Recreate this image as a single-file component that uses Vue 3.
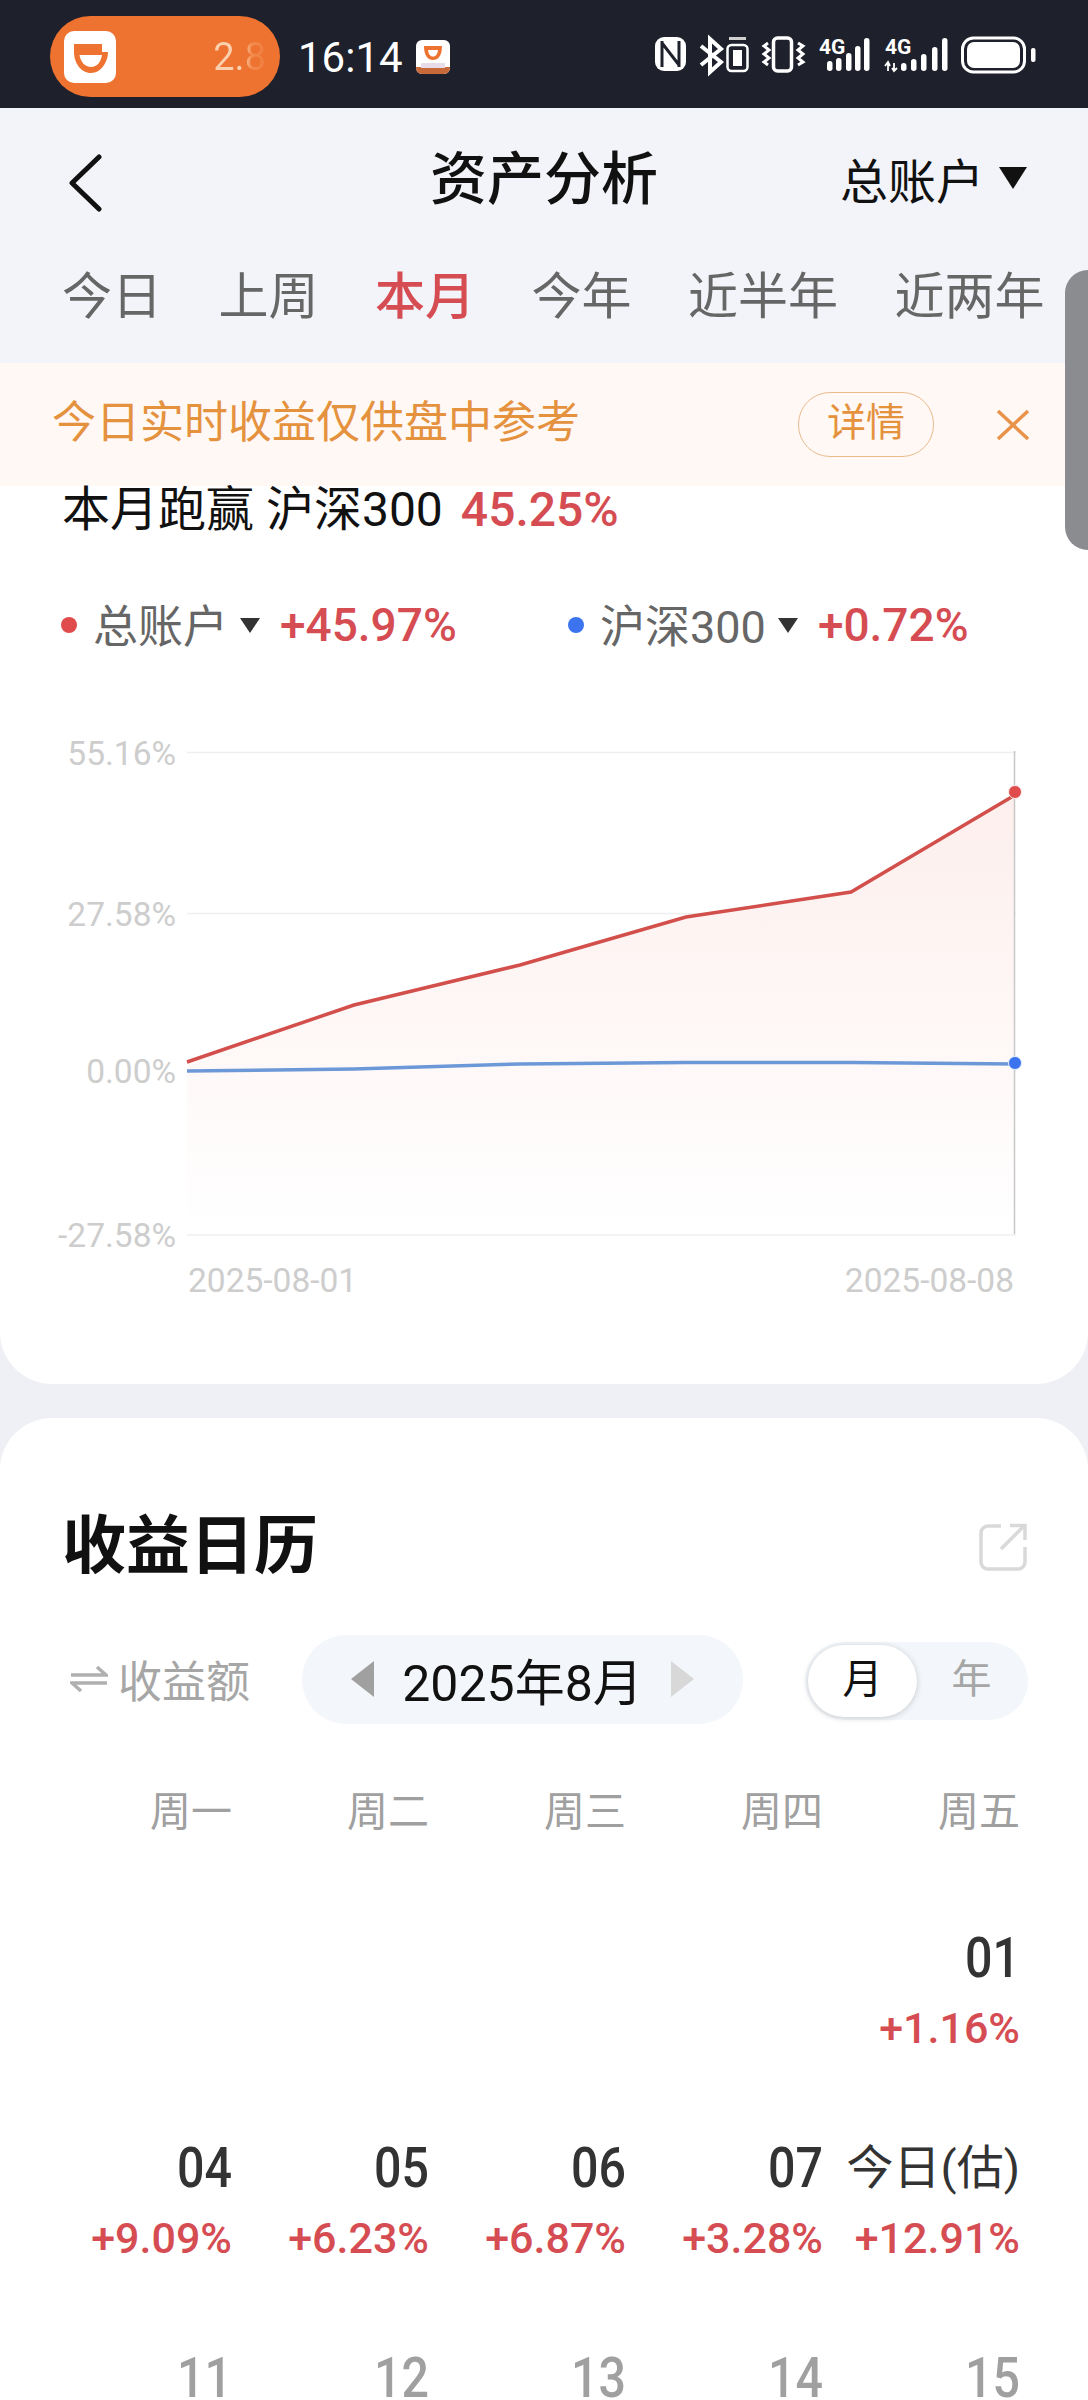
<template>
  <div class="page">
    <div class="status">
      <div class="pill">
        <svg class="didi" viewBox="0 0 52 52">
          <rect width="52" height="52" rx="10" fill="#fff" />
          <path d="M10 21 V13 H38 V21 H44 C44 31 37 42 27 42 C17 42 10 32 10 21 Z" fill="#ee7230" />
          <path d="M15.500 24 H38 C37 31 33 36 27 36 C21 36 16.500 31 15.500 24 Z" fill="#fff" />
          <rect x="38" y="12" width="8" height="9" fill="#fff" />
        </svg>
        <span class="pill-num">2.8</span>
      </div>
      <span class="time">16:14</span>
      <svg class="app-icon" viewBox="0 0 34 34">
        <rect width="34" height="34" rx="6" fill="#fff" />
        <path d="M8 6 H26 C26 16 22 20 17 20 C12 20 8 16 8 6 Z" fill="#ee7230" />
        <path d="M12 10 H22 C21.500 14 20 16.500 17 16.500 C14 16.500 12.500 14 12 10 Z" fill="#fff" />
        <path d="M0 27 H34 V28 A6 6 0 0 1 28 34 H6 A6 6 0 0 1 0 28 Z" fill="#c8693a" />
        <rect x="5" y="23" width="24" height="5" fill="#e9dcea" />
      </svg>
      <svg class="sys-icons" viewBox="640 25 410 60">
        <!-- nfc -->
        <rect x="653" y="38" width="31" height="34" rx="9" fill="#fff" />
        <path d="M660 42 V68 M677 42 V68 M660 44 L677 66" fill="none" stroke="#1e212b" stroke-width="3" />
        <!-- bluetooth -->
        <path d="M699 47 L719 63 L708 73 V40 L719 50 L699 66" fill="none" stroke="#fff" stroke-width="4" />
        <!-- phone battery -->
        <rect x="727" y="38" width="17" height="3" fill="#d0d0d0" />
        <rect x="725.500" y="46" width="20" height="26" rx="4" fill="none" stroke="#fff" stroke-width="2.500" />
        <rect x="731" y="51" width="9" height="16" fill="#fff" />
        <!-- vibrate -->
        <rect x="771.500" y="39" width="18" height="33" rx="4" fill="none" stroke="#fff" stroke-width="3.500" />
        <path d="M766 44 L762 47 L767 51 L762 55 L767 59 L762 63 L766 66 M796 44 L801 47 L796 51 L801 55 L796 59 L801 63 L796 66" fill="none" stroke="#fff" stroke-width="3" />
        <!-- signal 1 -->
        <text x="817" y="55" class="sig-text">4G</text>
        <rect x="825" y="62" width="5.500" height="10" rx="2.700" fill="#fff" />
        <rect x="834" y="59" width="5.500" height="13" rx="2.700" fill="#fff" />
        <rect x="844" y="54" width="5.500" height="18" rx="2.700" fill="#fff" />
        <rect x="853" y="47" width="5.500" height="25" rx="2.700" fill="#fff" />
        <rect x="862" y="39" width="5.500" height="33" rx="2.700" fill="#fff" />
        <!-- signal 2 -->
        <text x="883" y="55" class="sig-text">4G</text>
        <path d="M886 72 V64 M892 72 V64 M883 67 L886 63 L888 67 M890 69 L892 72 L895 69" fill="none" stroke="#fff" stroke-width="1.800" />
        <rect x="899" y="64" width="5.500" height="8" rx="2.700" fill="#fff" />
        <rect x="909" y="60" width="5.500" height="12" rx="2.700" fill="#fff" />
        <rect x="919" y="55" width="5.500" height="17" rx="2.700" fill="#fff" />
        <rect x="930" y="48" width="5.500" height="24" rx="2.700" fill="#fff" />
        <rect x="940" y="39" width="5.500" height="33" rx="2.700" fill="#fff" />
        <!-- battery -->
        <rect x="960.500" y="39" width="62" height="34" rx="11" fill="none" stroke="#fff" stroke-width="3" />
        <rect x="965" y="43" width="53" height="26" rx="7" fill="#fff" />
        <rect x="1029" y="49" width="4.500" height="14" rx="2" fill="#fff" />
      </svg>
    </div>

    <div class="nav">
      <div class="nav-top">
        <svg class="back" viewBox="0 0 36 58">
          <path d="M32 3 L5 29 L32 55" fill="none" stroke="#111" stroke-width="5" stroke-linecap="round" stroke-linejoin="round" />
        </svg>
        <div class="nav-title">资产分析</div>
        <div class="account">
          总账户
          <span class="caret big"></span>
        </div>
      </div>
      <div class="tabs">
        <span v-for="t in tabs" :key="t" class="tab" :class="{ active: t === '本月' }">{{ t }}</span>
      </div>
    </div>

    <div class="notice">
      <span class="notice-text">今日实时收益仅供盘中参考</span>
      <span class="detail">详情</span>
      <svg class="close" viewBox="0 0 34 34">
        <path d="M2 3 L32 31 M32 3 L2 31" fill="none" stroke="#e8924a" stroke-width="3.500" />
      </svg>
    </div>

    <div class="card chart-card">
      <div class="summary">
        <span>本月跑赢 沪深300</span>
        <span class="up rate">45.25%</span>
      </div>
      <div class="legend">
        <div class="legend-item first">
          <i class="dot red"></i>
          <span class="legend-name">总账户</span>
          <span class="caret"></span>
          <span class="up legend-val">+45.97%</span>
        </div>
        <div class="legend-item">
          <i class="dot blue"></i>
          <span class="legend-name">沪深300</span>
          <span class="caret"></span>
          <span class="up legend-val">+0.72%</span>
        </div>
      </div>
      <svg class="chart" viewBox="0 730 1088 580">
        <defs>
          <linearGradient id="area" x1="0" y1="0" x2="0" y2="1">
            <stop offset="0" stop-color="#fdefed" />
            <stop offset="1" stop-color="#ffffff" />
          </linearGradient>
        </defs>
        <line v-for="g in gridY" :key="g.y" x1="187" x2="1016" :y1="g.y" :y2="g.y" class="grid" />
        <text v-for="g in gridY" :key="g.label" x="176" :y="g.y + 12" text-anchor="end" class="axis">{{ g.label }}</text>
        <path :d="areaPath" fill="url(#area)" />
        <line x1="1014.500" x2="1014.500" y1="751" y2="1234" class="cursor" />
        <polyline :points="redPoints" class="line-red" />
        <polyline :points="bluePoints" class="line-blue" />
        <circle cx="1015" cy="792" r="6.500" fill="#e04b4b" stroke="#fdeeee" stroke-width="1" />
        <circle cx="1015" cy="1063" r="6.500" fill="#3b74ee" stroke="#e8efff" stroke-width="1" />
        <text x="188" y="1292" class="axis">2025-08-01</text>
        <text x="1014" y="1292" text-anchor="end" class="axis">2025-08-08</text>
      </svg>
    </div>

    <div class="card calendar">
      <div class="cal-head">
        <h2>收益日历</h2>
        <svg class="share" viewBox="0 0 48 48">
          <path d="M22 3 H9 A7 7 0 0 0 2 10 V39 A7 7 0 0 0 9 46 H39 A7 7 0 0 0 46 39 V24" fill="none" stroke="#d9d9d9" stroke-width="3.500" />
          <path d="M22 26 L45 3 M31 2.500 H46 V17" fill="none" stroke="#d9d9d9" stroke-width="3.500" />
        </svg>
      </div>
      <div class="controls">
        <div class="metric">
          <svg class="swap" viewBox="0 0 38 28">
            <path d="M1 10 H36 L27 2 M37 18 H2 L11 26" fill="none" stroke="#b0b0b0" stroke-width="3.500" />
          </svg>
          收益额
        </div>
        <div class="month">
          <i class="tri left"></i>
          <span>2025年8月</span>
          <i class="tri right"></i>
        </div>
        <div class="segment">
          <span class="seg on">月</span>
          <span class="seg">年</span>
        </div>
      </div>
      <div class="grid-cal weekdays">
        <span v-for="d in weekdays" :key="d">{{ d }}</span>
      </div>
      <div class="grid-cal days">
        <div v-for="(c, i) in cells" :key="i" class="cell" :class="{ future: c.future }">
          <div class="day" :class="{ today: c.today }">{{ c.day }}</div>
          <div class="up pct">{{ c.pct }}</div>
        </div>
      </div>
    </div>

    <div class="side-handle"></div>
  </div>
</template>

<script setup>
const tabs = ['今日', '上周', '本月', '今年', '近半年', '近两年']
const weekdays = ['周一', '周二', '周三', '周四', '周五']

const gridY = [
  { y: 752.5, label: '55.16%' },
  { y: 913.5, label: '27.58%' },
  { y: 1071, label: '0.00%' },
  { y: 1235, label: '-27.58%' }
]

const red = [[187, 1062], [354, 1005], [520, 965], [686, 917], [851, 892], [1015, 795]]
const blue = [[187, 1071], [354, 1069], [520, 1064], [686, 1062.5], [851, 1062.5], [1015, 1064]]

const redPoints = red.map(p => p.join(',')).join(' ')
const bluePoints = blue.map(p => p.join(',')).join(' ')
const areaPath = 'M' + red.map(p => p.join(' ')).join(' L') + ' L1015 1234 L187 1234 Z'

const cells = [
  {}, {}, {}, {},
  { day: '01', pct: '+1.16%' },
  { day: '04', pct: '+9.09%' },
  { day: '05', pct: '+6.23%' },
  { day: '06', pct: '+6.87%' },
  { day: '07', pct: '+3.28%' },
  { day: '今日(估)', pct: '+12.91%', today: true },
  { day: '11', future: true },
  { day: '12', future: true },
  { day: '13', future: true },
  { day: '14', future: true },
  { day: '15', future: true }
]
</script>

<style>
html, body {
  margin: 0;
  background: #fff;
}
</style>

<style scoped>
.page {
  position: relative;
  width: 1088px;
  height: 2400px;
  overflow: hidden;
  background: #eff0f5;
  font-family: Roboto, "Noto Sans CJK SC", sans-serif;
}

.status {
  display: flex;
  align-items: center;
  height: 108px;
  padding-left: 50px;
  box-sizing: border-box;
  background: #1e212b;
}

.pill {
  display: flex;
  align-items: center;
  justify-content: space-between;
  box-sizing: border-box;
  width: 230px;
  height: 81px;
  margin-top: 5px;
  padding: 0 14px 0 14px;
  border-radius: 41px;
  background: #ee7230;
}

.didi {
  width: 52px;
  height: 52px;
}

.pill-num {
  font-size: 38px;
  background: linear-gradient(90deg, #fbd0ae 58%, #f48c50 72%, #ef7c3c 100%);
  -webkit-background-clip: text;
  background-clip: text;
  color: transparent;
}

.time {
  margin-left: 18px;
  margin-top: 6px;
  font-size: 42px;
  color: #fff;
}

.app-icon {
  width: 34px;
  height: 34px;
  margin-left: 13px;
  margin-top: 6px;
}

.sys-icons {
  width: 410px;
  height: 60px;
  margin-left: 192px;
  flex-shrink: 0;
}

.sig-text {
  font-size: 21px;
  font-weight: 700;
  fill: #fff;
  font-family: Roboto, sans-serif;
}

.nav {
  height: 255px;
  background: #f3f4f9;
}

.nav-top {
  position: relative;
  display: flex;
  align-items: center;
  height: 146px;
  padding: 0 61px 0 67px;
}

.back {
  width: 36px;
  height: 58px;
  margin-top: 4px;
}

.nav-title {
  position: absolute;
  left: 430px;
  top: 36px;
  font-size: 57px;
  line-height: 72px;
  font-weight: 500;
  color: #111;
}

.account {
  display: flex;
  align-items: center;
  margin-left: auto;
  margin-top: -6px;
  font-size: 48px;
  color: #111;
}

.caret {
  display: inline-block;
  width: 0;
  height: 0;
  border-left: 10px solid transparent;
  border-right: 10px solid transparent;
  border-top: 15px solid #333;
}

.caret.big {
  margin-left: 15px;
  border-left-width: 14px;
  border-right-width: 14px;
  border-top: 22px solid #111;
}

.tabs {
  display: flex;
  padding-left: 62px;
  gap: 56.5px;
  margin-top: 11px;
  white-space: nowrap;
}

.tab {
  font-size: 50px;
  line-height: 64px;
  color: #666;
}

.tab.active {
  color: #d54d52;
  font-weight: 500;
}

.notice {
  display: flex;
  align-items: center;
  height: 123px;
  padding: 0 58px 0 52px;
  background: #fff8f5;
}

.notice-text {
  margin-bottom: 12px;
  font-size: 44px;
  color: #e5923f;
}

.detail {
  margin-left: auto;
  box-sizing: border-box;
  width: 136px;
  height: 65px;
  border: 1px solid #e9bb8d;
  border-radius: 32px;
  font-size: 39px;
  line-height: 61px;
  text-align: center;
  color: #e5923f;
}

.close {
  width: 34px;
  height: 34px;
  margin-left: 62px;
}

.card {
  background: #fff;
}

.chart-card {
  height: 898px;
  border-radius: 0 0 52px 52px / 0 0 52px 52px;
}

.up {
  color: #d54d52;
}

.summary {
  display: flex;
  gap: 18px;
  height: 48px;
  padding-left: 62px;
  font-size: 48px;
  line-height: 48px;
  color: #111;
}

.rate {
  font-weight: 500;
}

.legend {
  display: flex;
  height: 60px;
  margin-top: 61px;
  padding-left: 61px;
}

.legend-item {
  display: flex;
  align-items: center;
  font-size: 45px;
}

.legend-item.first {
  width: 507px;
}

.dot {
  width: 16px;
  height: 16px;
  border-radius: 50%;
  margin-right: 16px;
}

.dot.red {
  background: #e04b4b;
}

.dot.blue {
  background: #3b74ee;
}

.legend-name {
  color: #666;
  margin-right: 12px;
  margin-bottom: 4px;
}

.legend-val {
  margin-left: 20px;
  font-size: 46px;
  font-weight: 500;
}

.chart {
  display: block;
  width: 1088px;
  height: 580px;
  margin-top: 75px;
}

.grid {
  stroke: #efefef;
  stroke-width: 1.500;
}

.axis {
  font-size: 33.5px;
  fill: #cdcdcd;
}

.cursor {
  stroke: #c8c8c8;
  stroke-width: 1.500;
}

.line-red {
  fill: none;
  stroke: #d24f4b;
  stroke-width: 3.500;
}

.line-blue {
  fill: none;
  stroke: #6c98d8;
  stroke-width: 3.500;
}

.calendar {
  margin-top: 34px;
  height: 1100px;
  border-radius: 52px 52px 0 0;
}

.cal-head {
  display: flex;
  align-items: center;
  justify-content: space-between;
  padding: 84px 61px 0 62px;
  height: 90px;
}

.cal-head h2 {
  margin: 0;
  font-size: 64px;
  line-height: 90px;
  font-weight: 700;
  color: #111;
}

.share {
  width: 48px;
  height: 48px;
}

.controls {
  display: flex;
  align-items: center;
  height: 90px;
  margin-top: 42px;
  padding: 0 60px 0 70px;
}

.metric {
  display: flex;
  align-items: center;
  gap: 10px;
  width: 232px;
  font-size: 44px;
  color: #a6a6a6;
}

.swap {
  width: 38px;
  height: 28px;
}

.month {
  display: flex;
  align-items: center;
  justify-content: center;
  gap: 28px;
  width: 441px;
  height: 89px;
  border-radius: 45px;
  background: #f3f6fa;
  font-size: 50px;
  color: #111;
}

.tri {
  width: 0;
  height: 0;
  border-top: 18px solid transparent;
  border-bottom: 18px solid transparent;
}

.tri.left {
  border-right: 23px solid #a0a0a0;
}

.tri.right {
  border-left: 23px solid #d8d8d8;
}

.segment {
  display: flex;
  margin-left: auto;
  margin-top: 3px;
  align-items: center;
  box-sizing: border-box;
  width: 223px;
  height: 78px;
  padding-left: 3px;
  border-radius: 39px;
  background: #f3f6fa;
}

.seg {
  width: 109px;
  height: 72px;
  border-radius: 36px;
  font-size: 40px;
  line-height: 70px;
  text-align: center;
  color: #a6a6a6;
}

.seg.on {
  background: #fff;
  color: #111;
  box-shadow: 0 1px 6px rgba(0, 0, 0, 0.18);
}

.grid-cal {
  display: grid;
  grid-template-columns: repeat(5, 197px);
  padding-left: 35px;
  text-align: right;
}

.weekdays {
  margin-top: 60px;
  font-size: 41px;
  line-height: 56px;
  color: #a0a0a0;
}

.days {
  grid-auto-rows: 210px;
  margin-top: 90px;
}

.day {
  height: 56px;
  font-size: 55px;
  line-height: 56px;
  font-weight: 500;
  transform: scaleX(0.88);
  transform-origin: right;
  color: #333;
}

.day.today {
  font-size: 47px;
  font-weight: 400;
  transform: none;
}

.future .day {
  color: #a0a0a0;
}

.pct {
  margin-top: 19px;
  height: 46px;
  font-size: 43px;
  font-weight: 500;
  line-height: 46px;
}

.side-handle {
  position: absolute;
  top: 270px;
  right: 0;
  width: 23px;
  height: 280px;
  border-radius: 24px 0 0 24px;
  background: #8b8c90;
}
</style>
